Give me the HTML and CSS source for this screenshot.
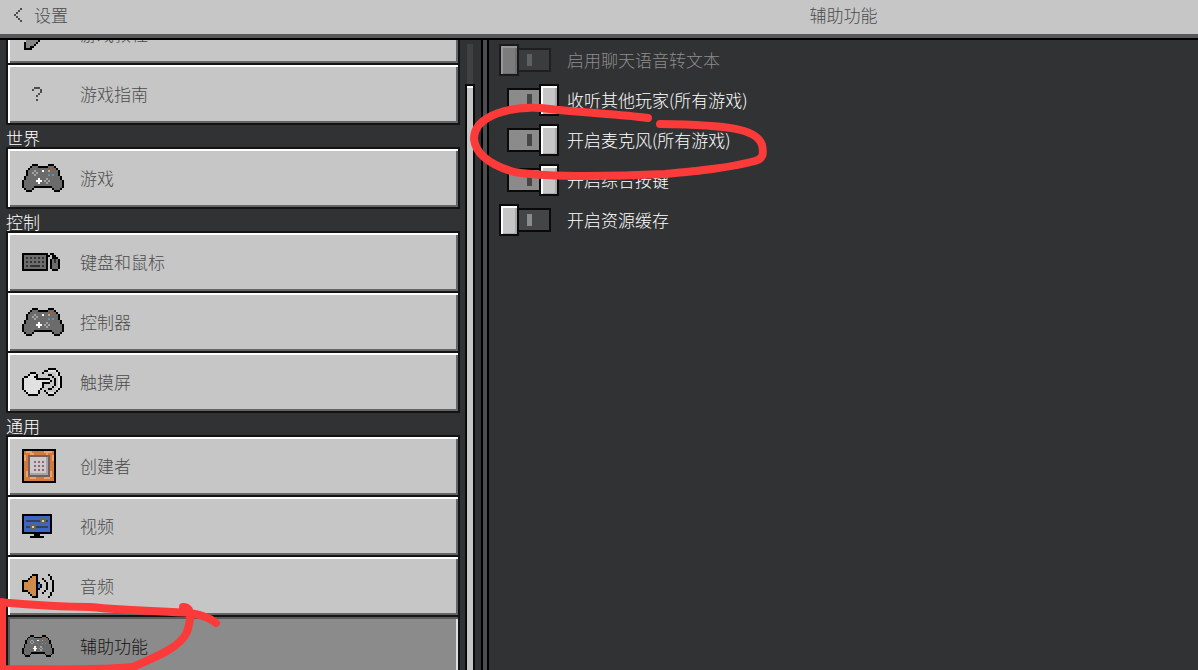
FILE: index.html
```html
<!DOCTYPE html>
<html lang="zh-CN">
<head>
<meta charset="utf-8">
<meta name="viewport" content="width=device-width, initial-scale=1">
<title>设置</title>
<link rel="stylesheet" href="styles.css">
</head>
<body>
<svg class="sprites" aria-hidden="true">
  <symbol id="pad" viewBox="0 0 21 14">
    <path d="M5 0h3v1h5V0h3v1h1v1h1v1h1v3h1v2h1v4h-1v1h-1v1h-3v-1h-1v-1H6v1H5v1H2v-1H1v-1H0V8h1V6h1V3h1V2h1V1h1z"/>
    <path fill="#6b6b6b" d="M5 1h3v1h5V1h3v1h1v1h1v3h1v2h1v4h-1v1h-3v-1h-1v-1H6v1H5v1H2v-1H1V8h1V6h1V3h1V2h1z"/>
    <path d="M6 11h9v1H6z"/>
    <path fill="#a2a2a2" d="M6 3h1v1H6zM5 4h1v1H5zM7 4h1v1H7zM6 5h1v1H6zM12 7h1v1h-1zM11 8h1v1h-1zM13 8h1v1h-1zM12 9h1v1h-1z"/>
    <path fill="#fff" d="M8 7h1v1h1v1H9v1H8V9H7V8h1zM10 3h1v1h-1z"/>
    <g class="pad-colors">
      <path fill="#b9ad62" d="M13 3h1v1h-1z"/>
      <path fill="#a35c40" d="M14 2h1v1h-1zM15 3h1v1h-1z"/>
      <path fill="#5597b5" d="M13 5h1v1h-1zM15 5h1v1h-1z"/>
    </g>
  </symbol>
</svg>

<div class="app">
  <header class="topbar">
    <button class="back" type="button">
      <svg class="chevron" viewBox="0 0 8 14" width="8" height="14" aria-hidden="true"><path d="M8 0v2H6v2H4v2H2v2h2v2h2v2h2v2H6v-2H4v-2H2V8H0V6h2V4h2V2h2V0z"/></svg>
      设置
    </button>
    <h1 class="title">辅助功能</h1>
  </header>

  <div class="columns">
    <aside class="sidebar">
      <nav class="menu" aria-label="设置">
        <button class="item" type="button">
          <svg viewBox="0 0 16 16" width="32" height="32" aria-hidden="true"><path d="M11 0h4v4h-1v2h-1v2h-1v1h-1v1h-1v1H9v1H8v1H7v1H6v1H5v1H4v1H2v-1H1v-4h1v-1h2V8h2V5h2V3h3z"/><path fill="#858585" d="M12 1h2v3h-1v2h-1v2h-1v1h-1v1H9v1H8v1H7v1H6v1H4v1H2v-4h2V9h2V6h3V3h3z"/></svg>
          <span>游戏教程</span>
        </button>
        <button class="item" type="button">
          <svg class="help" viewBox="0 0 5 7" width="10" height="14" aria-hidden="true"><path fill="#4c4c4c" d="M1 0h3v1H1zM0 1h1v1H0zM4 1h1v2H4zM3 3h1v1H3zM2 4h1v1H2zM2 6h1v1H2z"/></svg>
          <span>游戏指南</span>
        </button>

        <h2>世界</h2>
        <button class="item" type="button"><svg width="42" height="28" aria-hidden="true"><use href="#pad"/></svg><span>游戏</span></button>

        <h2>控制</h2>
        <button class="item" type="button">
          <svg viewBox="0 0 19 9" width="38" height="18" aria-hidden="true">
            <path d="M0 0h13v1h1V0h2v1h1v1h1v1h1v5h-1v1h-3V8h-1V3h1V1h-1v1h-1v7H0z"/>
            <path fill="#6d6d6d" d="M1 1h11v7H1zM15 3h3v5h-3z"/>
            <path fill="#333" d="M2 2h1v1H2zM4 2h1v1H4zM6 2h1v1H6zM8 2h1v1H8zM10 2h1v1h-1zM2 4h1v1H2zM4 4h1v1H4zM6 4h1v1H6zM8 4h1v1H8zM10 4h1v1h-1zM2 6h1v1H2zM4 6h5v1H4zM10 6h1v1h-1zM16 3h1v2h-1z"/>
          </svg>
          <span>键盘和鼠标</span>
        </button>
        <button class="item" type="button"><svg width="42" height="28" aria-hidden="true"><use href="#pad"/></svg><span>控制器</span></button>
        <button class="item" type="button">
          <svg viewBox="0 0 20 14" width="40" height="28" aria-hidden="true">
            <path fill="#e1e1e1" d="M2 4h2V3h3v2h7v2h-4v4H9v2H3v-1H2v-1H1V5h1z"/>
            <path d="M4 2h3v1H4zM3 3h1v1H3zM7 3h1v2h6v1H7V5H6V4h1zM1 4h2v1H1zM0 5h1v6H0zM14 6h1v1h-1zM10 7h4v1h-4zM10 8h1v2h-1zM9 10h1v1H9zM1 11h1v1H1zM8 11h1v2H8zM2 12h1v1H2zM3 13h5v1H3z"/>
            <path d="M13 0h4v1h-4zM11 1h2v1h-2zM17 1h1v1h-1zM10 2h1v1h-1zM18 2h1v2h-1zM13 3h2v1h-2zM15 4h1v1h-1zM19 4h1v6h-1zM16 5h1v4h-1zM15 9h1v1h-1zM13 10h2v1h-2zM18 10h1v1h-1zM11 11h1v1h-1zM17 11h1v1h-1zM12 12h1v1h-1zM16 12h1v1h-1zM13 13h3v1h-3z"/>
            <path fill="#e1e1e1" d="M13 1h4v1h-4zM17 2h1v2h-1zM18 4h1v6h-1zM17 10h1v1h-1zM13 12h3v1h-3z"/>
          </svg>
          <span>触摸屏</span>
        </button>

        <h2>通用</h2>
        <button class="item" type="button">
          <svg viewBox="0 0 17 17" width="34" height="34" aria-hidden="true">
            <path d="M0 0h17v17H0z"/><path fill="#d07a3f" d="M1 1h15v15H1z"/>
            <path fill="#eda26b" d="M2 1h3v1H2zM11 1h4v1h-4zM1 3h1v3H1zM15 3h1v3h-1zM4 2h2v1H4zM12 2h1v1h-1zM2 11h1v3H2zM14 11h1v3h-1zM4 14h3v1H4zM11 14h3v1h-3z"/>
            <path fill="#76605c" d="M3 3h11v11H3z"/><path fill="#a5a5a9" d="M4 4h9v9H4z"/><path fill="#c9c9ce" d="M4 4h8v8H4z"/>
            <path fill="#9c6268" d="M6 6h1v1H6zM8 6h1v1H8zM10 6h1v1h-1zM6 8h1v1H6zM8 8h1v1H8zM10 8h1v1h-1zM6 10h1v1H6zM8 10h1v1H8zM10 10h1v1h-1z"/>
          </svg>
          <span>创建者</span>
        </button>
        <button class="item" type="button">
          <svg viewBox="0 0 15 12" width="30" height="24" aria-hidden="true">
            <path d="M0 0h15v10H9v1h2v1H4v-1h2v-1H0z"/><path fill="#3b66c8" d="M1 1h13v8H1z"/>
            <path fill="#36404f" d="M2 3h11v1H2zM2 6h11v1H2z"/><path fill="#65645c" d="M9 2h3v3H9zM4 5h3v3H4z"/>
            <path fill="#d8d3ac" d="M10 3h1v1h-1zM5 6h1v1H5z"/>
          </svg>
          <span>视频</span>
        </button>
        <button class="item" type="button">
          <svg viewBox="0 0 16 12" width="32" height="24" aria-hidden="true">
            <path d="M5 0h3v12H5v-1H4v-1H3V9H0V3h3V2h1V1h1zM8 4h1v1h1v2H9v1H8z"/>
            <path fill="#cf8b49" d="M5 1h2v10H5v-1H4V9H3V8H1V4h2V3h1V2h1z"/><path fill="#3678e0" d="M8 5h1v2H8z"/>
            <path d="M10 2h1v1h-1zM11 3h1v1h-1zM12 4h1v4h-1zM11 8h1v1h-1zM10 9h1v1h-1zM13 0h1v1h-1zM14 1h1v2h-1zM15 3h1v6h-1zM14 9h1v2h-1zM13 11h1v1h-1z"/>
          </svg>
          <span>音频</span>
        </button>
        <button class="item selected" type="button" aria-current="page"><svg width="32" height="22" aria-hidden="true"><use href="#pad"/></svg><span>辅助功能</span></button>
      </nav>
      <div class="scrollbar" aria-hidden="true"><div class="thumb"></div></div>
    </aside>

    <main class="panel">
      <label class="option disabled"><span class="slot"><input type="checkbox" disabled></span>启用聊天语音转文本</label>
      <label class="option"><span class="slot"><input type="checkbox" checked></span>收听其他玩家(所有游戏)</label>
      <label class="option"><span class="slot"><input type="checkbox" checked></span>开启麦克风(所有游戏)</label>
      <label class="option"><span class="slot"><input type="checkbox" checked></span>开启综合按键</label>
      <label class="option"><span class="slot"><input type="checkbox"></span>开启资源缓存</label>
    </main>
  </div>

  <svg class="ink" viewBox="0 0 1198 670" width="1198" height="670" aria-hidden="true">
    <path d="M648 118C620 114 585 113 550 109C510 104 474 116 474 139C476 157 497 167 514 172C552 178 620 176 665 174C697 171 729 168 755 161C763 159 764 154 762 145C757 129 730 125 660 124"/>
    <path d="M-4 602C30 605 60 607 90 607C130 611 165 611 190 613C203 615 210 618 216 623M183 607C195 607 189 625 187 632C180 648 153 658 133 667C90 671 45 669 2 669L2 602"/>
  </svg>
</div>
</body>
</html>
```
FILE: styles.css
```css
* { box-sizing: border-box; }

body {
  margin: 0;
  background: #313233;
  color: #fff;
  font: 300 17px/20px "Noto Sans CJK SC", "Noto Sans", sans-serif;
}

button {
  margin: 0;
  border: 0;
  font: inherit;
  text-align: left;
  cursor: pointer;
}

h1, h2 { margin: 0; font: inherit; }

.sprites { position: absolute; width: 0; height: 0; }

svg { display: block; shape-rendering: crispEdges; }

.app {
  position: relative;
  display: flex;
  flex-direction: column;
  height: 100vh;
  overflow: hidden;
}

.topbar, .columns {
  display: grid;
  grid-template-columns: minmax(0, 489fr) minmax(0, 709fr);
}

.topbar {
  flex: none;
  align-items: center;
  height: 40px;
  padding-bottom: 8px;
  background: #c6c6c6;
  border-bottom: 2px solid #000;
  box-shadow: inset 0 -4px #58585a;
  color: #4c4c4c;
}

.back {
  display: flex;
  align-items: center;
  gap: 12px;
  padding: 0 14px;
  background: none;
  color: inherit;
}

.chevron { fill: #4c4c4c; }

.title { text-align: center; }

.columns { flex: 1; min-height: 0; }

.sidebar {
  display: flex;
  gap: 5px;
  padding: 0 6px;
  border-right: 2px solid #000;
  box-shadow: inset -4px 0 #4c4d4f, inset -6px 0 #000;
  overflow: hidden;
}

.menu {
  display: flex;
  flex: 1;
  flex-direction: column;
  min-width: 0;
  margin-top: -37px;
}

.menu h2 {
  flex: none;
  height: 26px;
  margin-bottom: -2px;
  padding-top: 5px;
}

.item {
  display: grid;
  flex: none;
  grid-template-columns: 58px 1fr;
  align-items: center;
  height: 62px;
  margin-bottom: -2px;
  padding: 0 14px;
  border: 2px solid #141414;
  background: #c6c6c6;
  box-shadow: inset 2px 2px #fff, inset -2px -2px #656565;
  color: #4c4c4c;
}

.help { margin-left: 10px; }

.selected {
  background: #8b8b8b;
  box-shadow: inset 2px 2px #5a5a5a, inset -2px -2px #dedede;
  color: #141414;
}

.selected .pad-colors { display: none; }

.scrollbar {
  display: flex;
  flex: none;
  width: 10px;
  margin: 4px 6px 0 0;
  padding-top: 40px;
  background: linear-gradient(#3f4041, #3f4041) center / 6px 100% no-repeat;
}

.thumb {
  flex: 1;
  border: 2px solid #0a0a0a;
  border-bottom: 0;
  background: #c6c6c6;
  box-shadow: inset 0 2px #fff;
}

.panel {
  padding: 0 10px;
  overflow: hidden;
}

.option {
  display: flex;
  align-items: center;
  gap: 8px;
  width: fit-content;
  height: 40px;
}

.disabled { color: #8d8d8d; }

.slot { display: flex; flex: none; width: 60px; }

.option input {
  position: relative;
  width: 52px;
  height: 24px;
  margin: 0;
  appearance: none;
  border: 2px solid #0a0a0a;
  background: linear-gradient(#8b8b8b, #8b8b8b) 26px center / 5px 12px no-repeat #444546;
}

.option input::before {
  content: "";
  position: absolute;
  top: -6px;
  left: -2px;
  box-sizing: border-box;
  width: 20px;
  height: 32px;
  border: 2px solid #0a0a0a;
  background: #c6c6c6;
  box-shadow: inset 2px 2px #fff, inset -2px -1px #a9a9a9;
}

.option input:checked {
  margin-left: 8px;
  background: linear-gradient(#444546, #444546) 18px center / 5px 12px no-repeat #8b8b8b;
}

.option input:checked::before { left: 30px; }

.option input:disabled {
  border-color: #1f1f1f;
  background: linear-gradient(#606060, #606060) 26px center / 5px 12px no-repeat #3b3c3d;
}

.option input:disabled::before {
  border-color: #1a1a1a;
  background: #7c7c7c;
  box-shadow: inset 2px 2px #979797, inset -2px -1px #6d6d6d;
}

.ink {
  position: absolute;
  top: 0;
  left: 0;
  fill: none;
  stroke: #fb3a3a;
  stroke-width: 8px;
  stroke-linecap: round;
  stroke-linejoin: round;
  shape-rendering: auto;
  pointer-events: none;
}
```
